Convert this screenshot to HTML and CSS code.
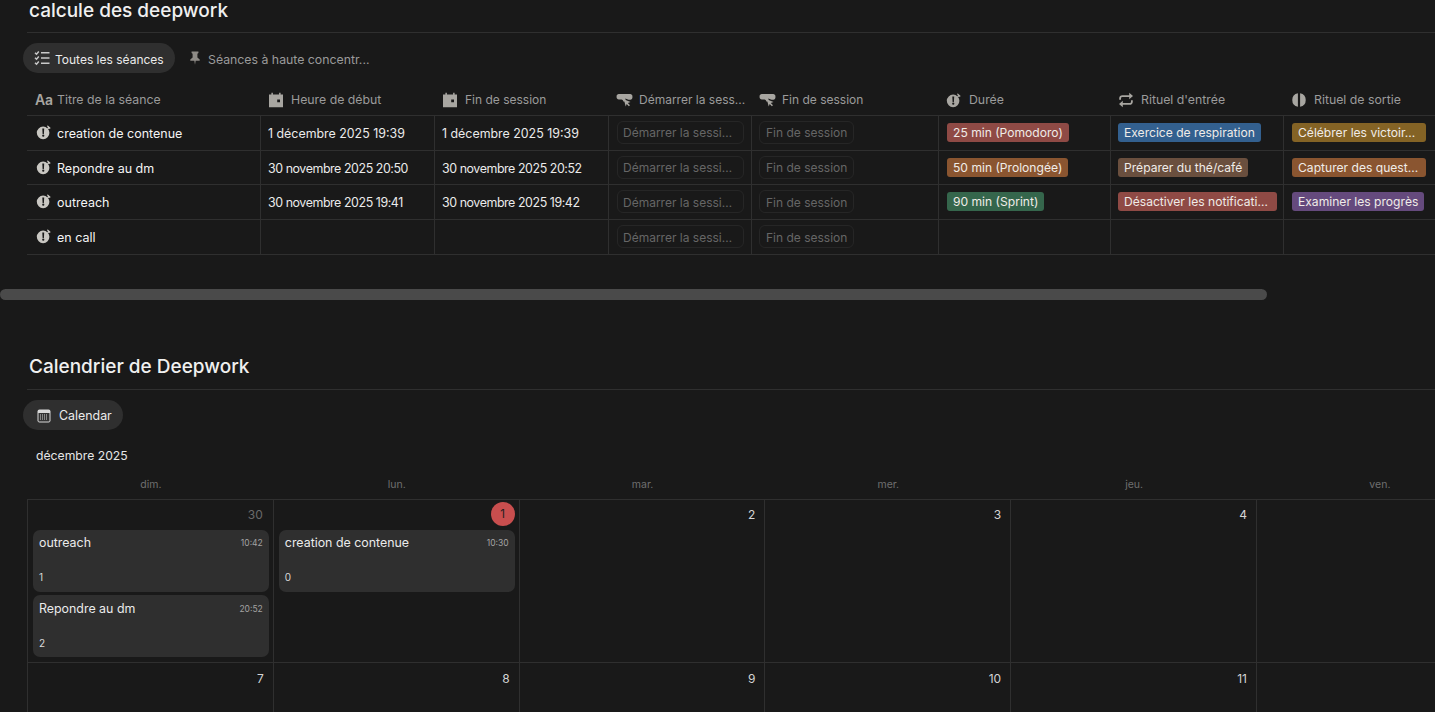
FILE: index.html
```html
<!DOCTYPE html>
<html lang="fr">
<head>
<meta charset="utf-8">
<title>Deepwork</title>
<link rel="stylesheet" href="styles.css">
</head>
<body>
<svg class="defs" width="0" height="0" aria-hidden="true">
  <symbol id="timer" viewBox="0 0 16 16">
    <path fill-rule="evenodd" d="M7.2 2.6a6.3 6.3 0 1 0 6.2 6.2A6.3 6.3 0 0 0 7.2 2.6ZM6.3 4.6h1.900l-.3 5.300H6.600ZM7.250 10.600a1.100 1.100 0 1 1 0 2.200 1.100 1.100 0 0 1 0-2.200Z"/>
    <path d="M11.600 1.200 14.700 4l-1 1.100-.7-.6-1 1-1-1 1-1-.9-.9Z"/>
  </symbol>
  <symbol id="cal-fill" viewBox="0 0 16 16">
    <path fill-rule="evenodd" d="M3.400 .8h1.500v1.600h6.200V.8h1.500v1.600H15v12.800H1V2.400h2.400ZM9.200 7.400v2.800H12V7.400Z"/>
  </symbol>
  <symbol id="click" viewBox="0 0 18 16">
    <path d="M3 1.600h12c1.400 0 2.400 1 2.400 2.400v1.300c0 1.200-.9 2.200-2.100 2.400l-2 .1-3.500-1.400.9 3.200H7.800c-.5-1.500-1-2-2-2.100H3C1.600 7.500.6 6.500.6 5.200V4C.6 2.600 1.600 1.600 3 1.600Z"/>
    <path d="M8.200 7.200 15.400 10l-2.900 1.200 2.300 2.400-1.200 1.100-2.300-2.400L10.300 15Z"/>
  </symbol>
  <symbol id="repeat" viewBox="0 0 16 16">
    <path d="M11.200.8 15 4l-3.800 3.200V5H4.500C3.500 5 3 5.500 3 6.500v1.200H1.200V6.300c0-2 1.300-3.100 3.200-3.100h6.800ZM4.800 15.200 1 12l3.800-3.200V11h6.700c1 0 1.500-.5 1.500-1.500V8.300h1.800v1.400c0 2-1.300 3.100-3.200 3.100H4.800Z"/>
  </symbol>
  <symbol id="half" viewBox="0 0 16 16">
    <path d="M6.900 1.300v13.400A6.800 6.800 0 0 1 6.900 1.300ZM9.100 1.300a6.800 6.800 0 0 1 0 13.400Z"/>
  </symbol>
</svg>

<main class="page">
  <h2 class="heading">calcule des deepwork</h2>
  <nav class="tabs">
    <span class="tab tab-active">
      <svg class="tab-icon" viewBox="0 0 16 16"><path d="M1 2.800 2.500 4.200l2.300-2.600M1 7.800 2.500 9.200l2.300-2.600M1 12.800l1.500 1.400 2.300-2.600" fill="none" stroke="currentColor" stroke-width="1.500"/><path d="M7 2.800h8.500M7 8h8.500M7 13.200h8.500" fill="none" stroke="currentColor" stroke-width="1.600"/></svg>
      Toutes les séances
    </span>
    <span class="tab tab-plain">
      <svg class="pin" viewBox="0 0 14 16"><path d="M3 .5h8v1.700L9.800 3v4.300l2.700 2.500v1.400H7.800L7 15.800l-.8-4.600H1.500V9.800l2.700-2.500V3L3 2.200Z"/></svg>
      Séances à haute concentr...
    </span>
  </nav>

  <div class="table">
    <div class="row row-head">
      <div class="th"><span class="aa">Aa</span><span>Titre de la séance</span></div>
      <div class="th"><svg class="ico wide"><use href="#cal-fill"/></svg>Heure de début</div>
      <div class="th th-narrow"><svg class="ico wide"><use href="#cal-fill"/></svg>Fin de session</div>
      <div class="th th-narrow"><svg class="ico clk"><use href="#click"/></svg>Démarrer la sess...</div>
      <div class="th th-narrow"><svg class="ico clk"><use href="#click"/></svg>Fin de session</div>
      <div class="th"><svg class="ico wide"><use href="#timer"/></svg>Durée</div>
      <div class="th"><svg class="ico wide"><use href="#repeat"/></svg>Rituel d'entrée</div>
      <div class="th"><svg class="ico wide"><use href="#half"/></svg>Rituel de sortie</div>
    </div>

    <div class="row">
      <div class="td td-title"><svg class="ico-row"><use href="#timer"/></svg>creation de contenue</div>
      <div class="td tight">1 décembre 2025 19:39</div>
      <div class="td tight">1 décembre 2025 19:39</div>
      <div class="td"><span class="btn btn-long">Démarrer la sessi…</span></div>
      <div class="td tight"><span class="btn">Fin de session</span></div>
      <div class="td"><span class="tag red">25 min (Pomodoro)</span></div>
      <div class="td tight"><span class="tag blue">Exercice de respiration</span></div>
      <div class="td"><span class="tag yellow tag-fill">Célébrer les victoir…</span></div>
    </div>
    <div class="row">
      <div class="td td-title"><svg class="ico-row"><use href="#timer"/></svg>Repondre au dm</div>
      <div class="td tight date-nov">30 novembre 2025 20:50</div>
      <div class="td tight date-nov">30 novembre 2025 20:52</div>
      <div class="td"><span class="btn btn-long">Démarrer la sessi…</span></div>
      <div class="td tight"><span class="btn">Fin de session</span></div>
      <div class="td"><span class="tag orange">50 min (Prolongée)</span></div>
      <div class="td tight"><span class="tag brown">Préparer du thé/café</span></div>
      <div class="td"><span class="tag orange tag-fill">Capturer des quest…</span></div>
    </div>
    <div class="row">
      <div class="td td-title"><svg class="ico-row"><use href="#timer"/></svg>outreach</div>
      <div class="td tight date-nov">30 novembre 2025 19:41</div>
      <div class="td tight date-nov">30 novembre 2025 19:42</div>
      <div class="td"><span class="btn btn-long">Démarrer la sessi…</span></div>
      <div class="td tight"><span class="btn">Fin de session</span></div>
      <div class="td"><span class="tag green">90 min (Sprint)</span></div>
      <div class="td tight"><span class="tag red tag-fill-wide">Désactiver les notificati…</span></div>
      <div class="td"><span class="tag purple">Examiner les progrès</span></div>
    </div>
    <div class="row">
      <div class="td td-title"><svg class="ico-row"><use href="#timer"/></svg>en call</div>
      <div class="td"></div>
      <div class="td"></div>
      <div class="td"><span class="btn btn-long">Démarrer la sessi…</span></div>
      <div class="td tight"><span class="btn">Fin de session</span></div>
      <div class="td"></div>
      <div class="td"></div>
      <div class="td"></div>
    </div>
  </div>

  <div class="scroll-track"><div class="scroll-thumb"></div></div>

  <h2 class="heading heading-cal">Calendrier de Deepwork</h2>
  <nav class="tabs tabs-cal">
    <span class="tab tab-active tab-cal">
      <svg class="tab-icon-cal" viewBox="0 0 14 14"><rect x=".5" y=".5" width="13" height="13" rx="2" fill="#d8d8d8"/><rect x="1.500" y="4" width="11" height="8.500" fill="#333"/><path d="M3 6h8M3 8h8M3 10h8" stroke="#d8d8d8" stroke-dasharray="1 1" fill="none"/></svg>
      Calendar
    </span>
  </nav>

  <div class="month">décembre 2025</div>

  <div class="weekdays">
    <div>dim.</div><div>lun.</div><div>mar.</div><div>mer.</div><div>jeu.</div><div>ven.</div>
  </div>
  <div class="cal-grid">
    <div class="day"><div class="num num-muted">30</div>
      <div class="event"><div class="ev-top"><span>outreach</span><span class="ev-time">10:42</span></div><div class="ev-count">1</div></div>
      <div class="event"><div class="ev-top"><span>Repondre au dm</span><span class="ev-time">20:52</span></div><div class="ev-count">2</div></div>
    </div>
    <div class="day"><div class="num"><span class="today">1</span></div>
      <div class="event"><div class="ev-top"><span>creation de contenue</span><span class="ev-time">10:30</span></div><div class="ev-count">0</div></div>
    </div>
    <div class="day"><div class="num">2</div></div>
    <div class="day"><div class="num">3</div></div>
    <div class="day"><div class="num">4</div></div>
    <div class="day"></div>
    <div class="day"><div class="num">7</div></div>
    <div class="day"><div class="num">8</div></div>
    <div class="day"><div class="num">9</div></div>
    <div class="day"><div class="num">10</div></div>
    <div class="day"><div class="num">11</div></div>
    <div class="day"></div>
  </div>
</main>
</body>
</html>
```

FILE: styles.css
```css
* { box-sizing: border-box; }
html, body { margin: 0; height: 100%; overflow: hidden; background: #191919; }
body { font-family: Inter, "Noto Sans", sans-serif; color: #e6e6e6; font-size: 12.4px; }
.defs { position: absolute; }
.page { width: 1435px; height: 712px; overflow: hidden; }

.heading {
  margin: 0 0 0 27px;
  height: 33px;
  padding: 0 0 0 2px;
  font-size: 19px;
  font-weight: 500;
  line-height: 21px;
  color: #f0f0f0;
  border-bottom: 1px solid #2f2f2f;
}
.heading-cal { height: 36px; margin-top: 54px; padding-top: 1px; line-height: 23px; }

.tabs { display: flex; align-items: center; gap: 14px; margin: 10px 0 0 23px; height: 30px; }
.tab { display: inline-flex; align-items: center; height: 30px; border-radius: 15px; white-space: nowrap; padding-top: 2px; }
.tab-active { background: #2f2f2f; color: #ebebeb; padding-left: 11px; width: 152px; gap: 5px; font-size: 12px; }
.tab-icon { width: 16px; height: 16px; color: #c9c9c9; flex: none; margin-top: -2px; }
.tab-plain { color: #9b9b9b; gap: 7px; font-size: 12.3px; }
.pin { width: 12px; height: 16px; fill: #8e8b86; flex: none; margin-top: -2px; }
.tab-cal { width: 100px; padding-left: 14px; padding-top: 1px; gap: 8px; font-size: 12.4px; }
.tab-icon-cal { width: 14px; height: 14px; flex: none; }

.table { margin: 13px 0 0 27px; width: 1600px; border-bottom: 1px solid #2f2f2f; }
.row {
  display: grid;
  grid-template-columns: 234px 174px 174px 143px 187px 172px 173px 173px;
  height: 34.7px;
  border-bottom: 1px solid #2f2f2f;
}
.row-head { height: 30px; }
.row:last-child { border-bottom: 0; height: 34px; }
.th {
  display: flex;
  align-items: center;
  padding: 0 0 2px 7px;
  color: #9b9b9b;
  font-size: 12.3px;
  white-space: nowrap;
}
.th-narrow { font-size: 12px; }
.ico { width: 16px; height: 16px; fill: #a8a6a1; flex: none; }
.ico.wide { margin-right: 7px; }
.ico.clk { width: 17px; margin-right: 6px; }
.aa { font-weight: 600; color: #a8a6a1; font-size: 14px; width: 22px; margin-left: 1px; letter-spacing: -.3px; }
.td {
  display: flex;
  align-items: center;
  padding: 0 8px;
  border-right: 1px solid #2f2f2f;
  font-size: 12.4px;
  color: #ebebeb;
  white-space: nowrap;
  overflow: hidden;
}
.tight { padding-left: 7px; padding-top: 1px; }
.date-nov { letter-spacing: -.42px; }
.td-title { padding-left: 9px; padding-top: 1px; font-size: 12.5px; font-weight: 400; color: #f4f4f4; }
.ico-row { width: 16px; height: 16px; fill: #c9c7c2; margin-right: 5px; flex: none; margin-top: -3px; }
.btn {
  display: inline-flex;
  align-items: center;
  flex: none;
  width: 95px;
  height: 23px;
  padding: 1px 0 0 6px;
  margin-top: -1px;
  border: 1px solid #262626;
  border-radius: 6px;
  color: #666;
  font-size: 12px;
}
.tight .btn { margin-top: -2px; }
.btn-long { width: 127px; padding-left: 5px; overflow: hidden; }
.tag {
  display: inline-block;
  flex: none;
  height: 19px;
  line-height: 19px;
  padding: 0 6px;
  border-radius: 3px;
  color: #f0ece8;
  font-size: 12.1px;
  margin-top: -1px;
  white-space: nowrap;
  overflow: hidden;
}
.tight .tag { margin-top: -2px; }
.tag-fill { width: 134px; }
.tag-fill-wide { width: 159px; }
.red { background: #8f4a45; }
.blue { background: #33608f; }
.yellow { background: #846325; }
.orange { background: #8a5530; }
.brown { background: #6a4f3e; }
.green { background: #35664c; }
.purple { background: #654a7d; }

.scroll-track { margin-top: 34px; height: 11px; width: 1267px; }
.scroll-thumb { height: 11px; background: #4a4a4a; border-radius: 6px; }

.month { margin: 18px 0 0 36px; height: 16px; font-size: 12.2px; line-height: 16px; color: #e6e6e6; }
.weekdays {
  display: grid;
  grid-template-columns: repeat(6, 245.8px);
  margin: 13px 0 0 28px;
  height: 15px;
  text-align: center;
  font-size: 10.5px;
  line-height: 15px;
  color: #6f6f6f;
}
.cal-grid {
  display: grid;
  grid-template-columns: repeat(6, 245.8px);
  grid-auto-rows: 163px;
  margin: 7px 0 0 27px;
  width: 1475px;
  border-top: 1px solid #2f2f2f;
  border-left: 1px solid #2f2f2f;
}
.day { border-right: 1px solid #2f2f2f; border-bottom: 1px solid #2f2f2f; padding: 0 4px 0 5px; }
.num { height: 30px; display: flex; align-items: center; justify-content: flex-end; padding-right: 5px; font-size: 12px; color: #d4d4d4; }
.day:nth-child(-n+6) .num { height: 28px; margin-bottom: 2px; }
.num-muted { color: #6a6a6a; padding-right: 6px; }
.today {
  width: 24px; height: 24px; border-radius: 50%;
  background: #c84e4e; color: #1d1d1d; display: flex; align-items: center; justify-content: center;
  margin-right: -5px;
  font-size: 11.5px;
}
.event { height: 62px; background: #2f2f2f; border-radius: 7px; padding: 5px 6px 0; margin-bottom: 3px; display: flex; flex-direction: column; }
.event + .event { padding-top: 6px; }
.ev-top { display: flex; justify-content: space-between; align-items: center; font-size: 12.4px; color: #ebebeb; line-height: 16px; }
.ev-time { font-size: 8.5px; color: #a3a3a3; }
.ev-count { margin-top: 18px; font-size: 10px; line-height: 16px; color: #d9d9d9; }
```
